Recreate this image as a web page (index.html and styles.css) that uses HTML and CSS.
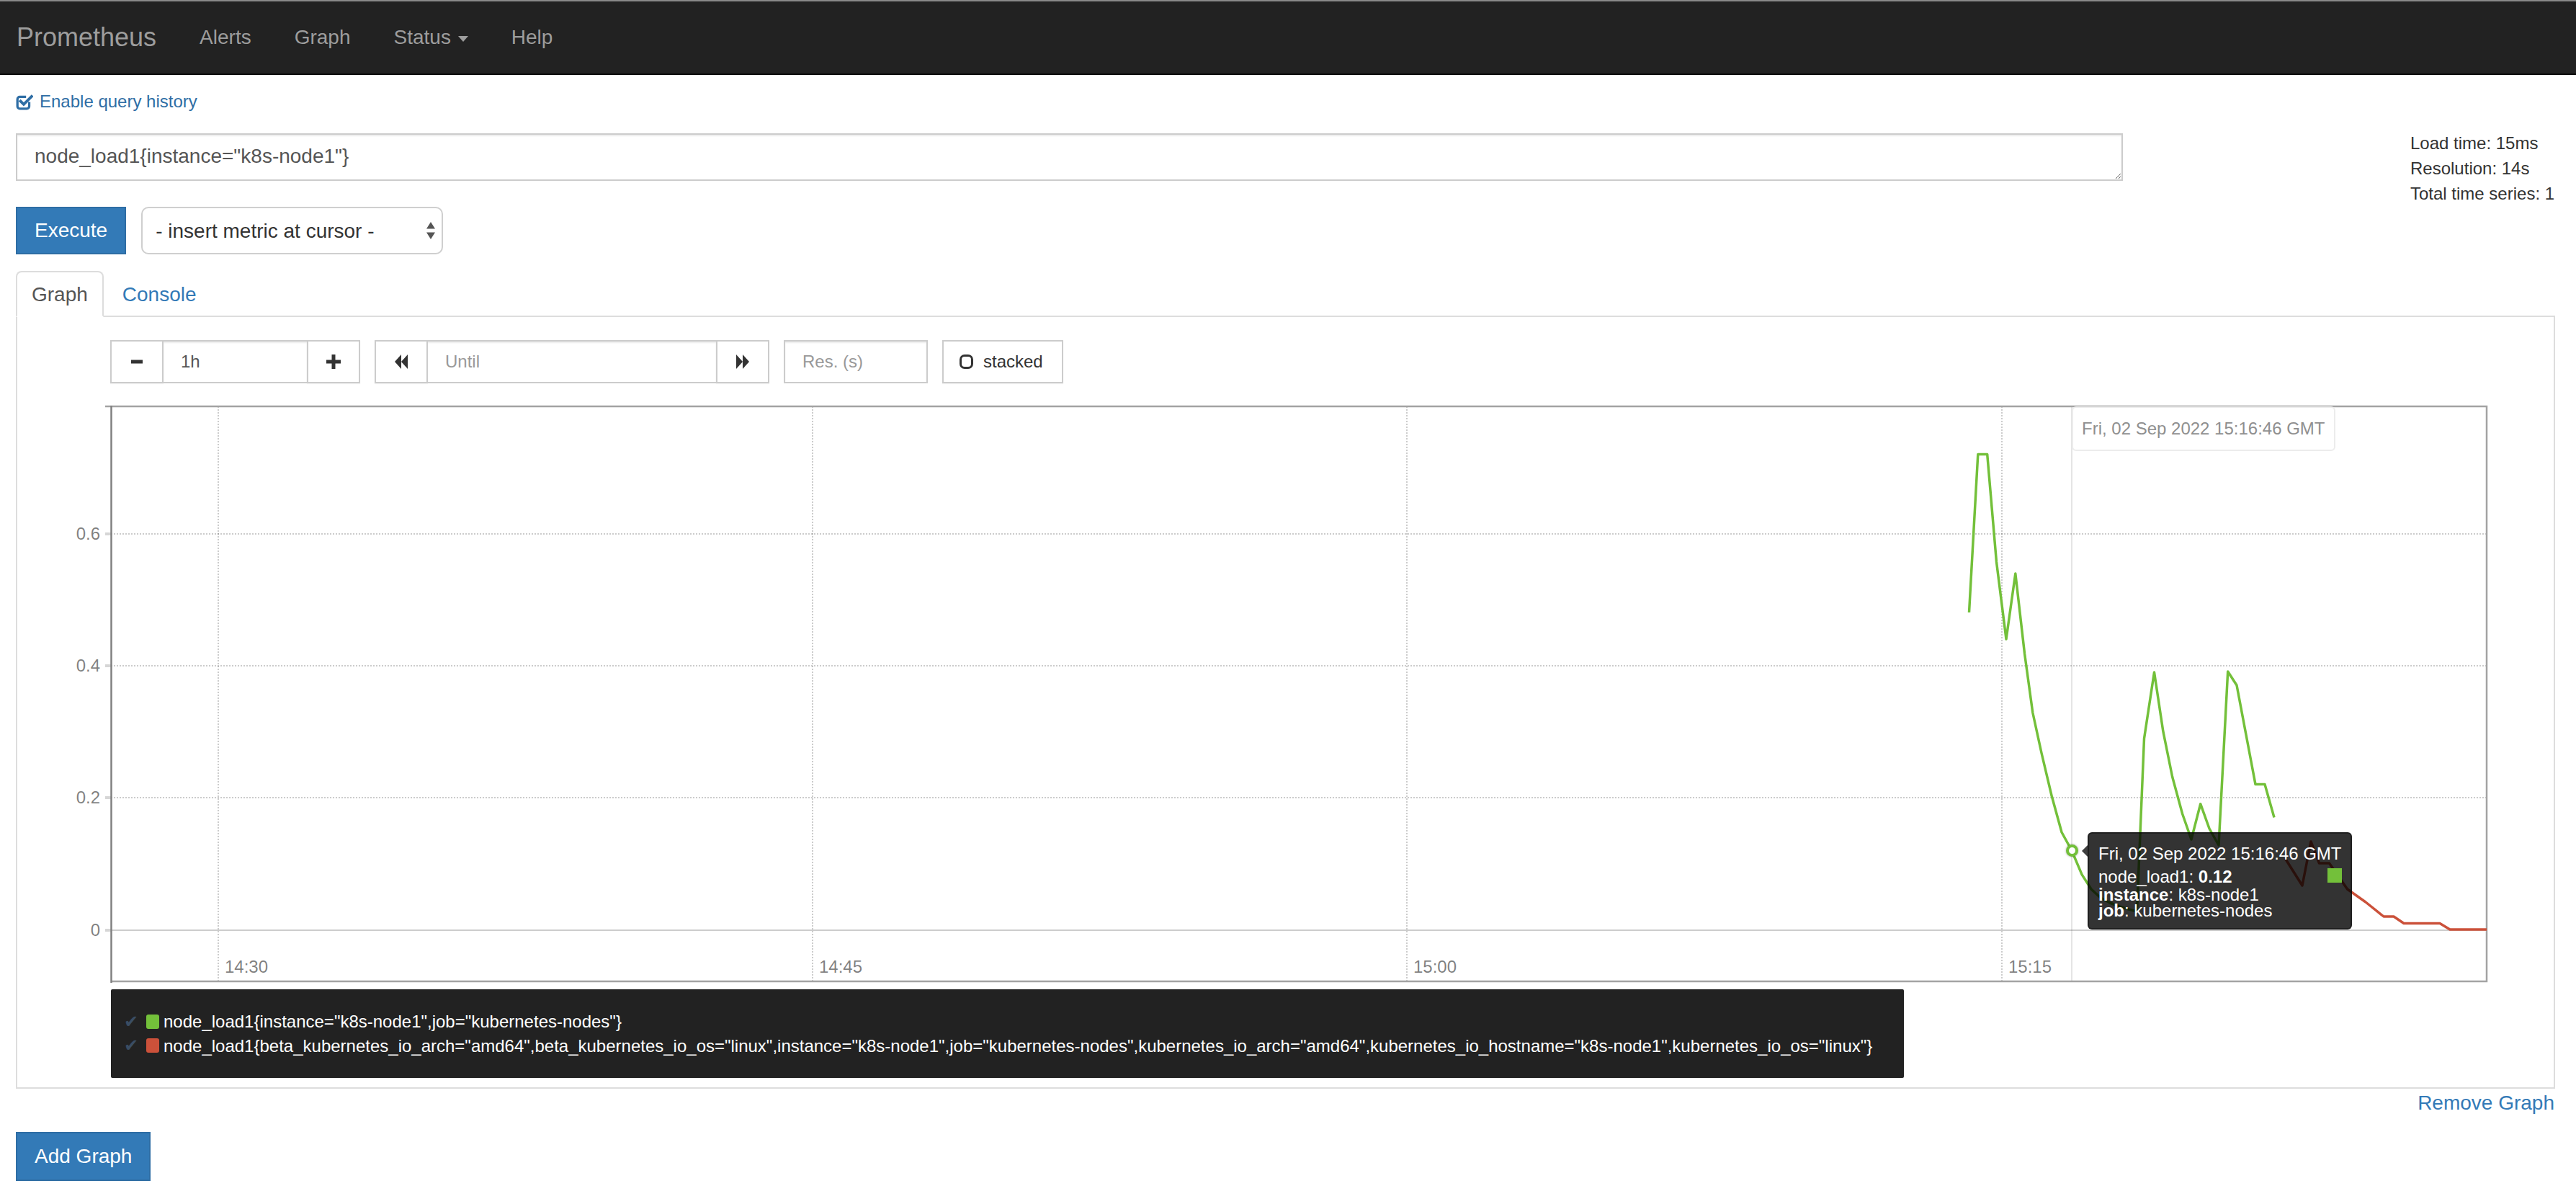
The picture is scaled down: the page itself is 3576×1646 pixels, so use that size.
FILE: index.html
```html
<!DOCTYPE html>
<html lang="en">
<head>
<meta charset="utf-8">
<title>Prometheus Time Series Collection and Processing Server</title>
<link rel="stylesheet" href="styles.css">
</head>
<body>
<nav class="navbar">
  <a class="brand" href="#">Prometheus</a>
  <ul class="nav">
    <li><a href="#">Alerts</a></li>
    <li><a href="#">Graph</a></li>
    <li><a href="#">Status <span class="caret"></span></a></li>
    <li><a href="#">Help</a></li>
  </ul>
</nav>

<main class="page">
  <div class="query-row">
    <div class="query-main">
      <a class="history" href="#">
        <svg class="chk" width="24" height="24" viewBox="0 0 22 22"><path d="M17 11.5v5.5a3 3 0 0 1-3 3H5a3 3 0 0 1-3-3V8a3 3 0 0 1 3-3h8" fill="none" stroke="currentColor" stroke-width="3"/><path d="M6 10.5l4 4 10-10" fill="none" stroke="currentColor" stroke-width="3.6" stroke-linecap="square"/></svg>
        <span>Enable query history</span>
      </a>
      <textarea class="expr" spellcheck="false">node_load1{instance="k8s-node1"}</textarea>
      <div class="exec-row">
        <button class="btn-primary">Execute</button>
        <label class="select">
          <select><option>- insert metric at cursor -</option></select>
          <svg width="14" height="26" viewBox="0 0 14 26"><path d="M7 1 L13 10.5 H1 Z M7 25 L13 15.5 H1 Z" fill="#555"/></svg>
        </label>
      </div>
    </div>
    <div class="stats">
      <div>Load time: 15ms</div>
      <div>Resolution: 14s</div>
      <div>Total time series: 1</div>
    </div>
  </div>

  <ul class="tabs">
    <li class="active"><a href="#">Graph</a></li>
    <li><a href="#">Console</a></li>
  </ul>

  <section class="panel">
    <div class="controls">
      <div class="igroup">
        <button class="cbtn"><svg width="16" height="6" viewBox="0 0 16 6"><rect y="0.5" width="16" height="5" fill="#333"/></svg></button>
        <input class="cinput w-range" value="1h">
        <button class="cbtn"><svg width="20" height="20" viewBox="0 0 20 20"><path d="M7.5 0h5v7.5H20v5h-7.5V20h-5v-7.5H0v-5h7.5z" fill="#333"/></svg></button>
      </div>
      <div class="igroup">
        <button class="cbtn"><svg width="20" height="20" viewBox="0 0 20 20"><path d="M10 0 L1 10 L10 20 Z M19 0 L10 10 L19 20 Z" fill="#333"/></svg></button>
        <input class="cinput w-until" placeholder="Until">
        <button class="cbtn"><svg width="20" height="20" viewBox="0 0 20 20"><path d="M1 0 L10 10 L1 20 Z M10 0 L19 10 L10 20 Z" fill="#333"/></svg></button>
      </div>
      <input class="cinput w-res solo" placeholder="Res. (s)">
      <button class="cbtn stacked"><svg width="19" height="20" viewBox="0 0 19 20"><rect x="1.5" y="1.5" width="16" height="17" rx="5.5" fill="none" stroke="#333" stroke-width="3"/></svg><span>stacked</span></button>
    </div>

    <div class="chart">
      <svg class="plot" width="3360" height="810" viewBox="0 0 3360 810">
        <g stroke="rgba(0,0,0,0.2)" stroke-width="2" stroke-dasharray="2 2" fill="none">
          <line x1="54" y1="187" x2="3352" y2="187"/>
          <line x1="54" y1="370" x2="3352" y2="370"/>
          <line x1="54" y1="553" x2="3352" y2="553"/>
          <line x1="203" y1="10" x2="203" y2="808"/>
          <line x1="1028" y1="10" x2="1028" y2="808"/>
          <line x1="1853" y1="10" x2="1853" y2="808"/>
          <line x1="2679" y1="10" x2="2679" y2="808"/>
        </g>
        <line x1="54" y1="737" x2="3352" y2="737" stroke="rgba(0,0,0,0.2)" stroke-width="2"/>
        <line x1="2776" y1="10" x2="2776" y2="808" stroke="rgba(0,0,0,0.1)" stroke-width="2"/>
        <g stroke="rgba(0,0,0,0.16)" stroke-width="4">
          <line x1="46" y1="187" x2="54" y2="187"/>
          <line x1="46" y1="370" x2="54" y2="370"/>
          <line x1="46" y1="553" x2="54" y2="553"/>
          <line x1="46" y1="737" x2="54" y2="737"/>
        </g>
        <path d="M46 10 H3352 V808 H54" fill="none" stroke="#a3a3a3" stroke-width="2.5"/>
        <line x1="54.5" y1="9" x2="54.5" y2="810" stroke="#808080" stroke-width="2.5"/>
        <g class="ylab" text-anchor="end">
          <text x="39" y="195">0.6</text>
          <text x="39" y="378">0.4</text>
          <text x="39" y="561">0.2</text>
          <text x="39" y="745">0</text>
        </g>
        <g class="xlab">
          <text x="212" y="796">14:30</text>
          <text x="1037" y="796">14:45</text>
          <text x="1862" y="796">15:00</text>
          <text x="2688" y="796">15:15</text>
        </g>
        <polyline fill="none" stroke="#73c03a" stroke-width="3.5" stroke-linejoin="round" points="2633.5,296 2645.8,76.5 2658.7,76.5 2671.5,226 2685,333 2697.8,242 2710.6,353.5 2721.8,435 2734,491 2748,550 2762,601 2776,626.5 2790,659.6 2803,680 2816,692 2829,699 2842,704 2855,708 2866.5,711 2876.5,471 2890.5,379 2902.8,460.7 2915.6,524 2929.6,575.5 2942,611 2954.7,561.7 2967,596 2980,619 2992.7,378 3005,397 3018,465.8 3031,534.6 3044,534.6 3057,580.6"/>
        <polyline fill="none" stroke="#cb513a" stroke-width="3.5" stroke-linejoin="round" points="3072,637 3096,675 3108,614 3119.5,644 3133.5,644 3158.6,680 3184,698 3209,718 3223,718 3237,727.5 3287,727.5 3301,736 3352,736"/>
      </svg>
      <div class="xlabel">Fri, 02 Sep 2022 15:16:46 GMT</div>
      <div class="dot"></div>
      <div class="tip">
        <div class="tip-date">Fri, 02 Sep 2022 15:16:46 GMT</div>
        <div class="tip-val"><span class="tip-sw"></span>node_load1: <b>0.12</b></div>
        <div class="tip-lbl"><b>instance</b>: k8s-node1</div>
        <div class="tip-lbl"><b>job</b>: kubernetes-nodes</div>
      </div>
    </div>

    <div class="legend">
      <ul>
        <li><span class="action">✔</span><span class="swatch green"></span><span class="label">node_load1{instance="k8s-node1",job="kubernetes-nodes"}</span></li>
        <li><span class="action">✔</span><span class="swatch red"></span><span class="label">node_load1{beta_kubernetes_io_arch="amd64",beta_kubernetes_io_os="linux",instance="k8s-node1",job="kubernetes-nodes",kubernetes_io_arch="amd64",kubernetes_io_hostname="k8s-node1",kubernetes_io_os="linux"}</span></li>
      </ul>
    </div>
  </section>

  <div class="remove"><a href="#">Remove Graph</a></div>
  <div class="add-row"><button class="btn-primary add">Add Graph</button></div>
</main>
</body>
</html>
```

FILE: styles.css
```css
* { box-sizing: border-box; }
html, body { margin: 0; padding: 0; }
body {
  font-family: "Liberation Sans", Arial, Helvetica, sans-serif;
  font-size: 28px;
  line-height: 40px;
  color: #333;
  background: #fff;
  overflow: hidden;
}
a { color: #337ab7; text-decoration: none; }

/* navbar */
.navbar {
  display: flex;
  align-items: center;
  height: 104px;
  background: #222;
  border-top: 2px solid #8a8a8a;
  border-bottom: 2px solid #080808;
}
.brand {
  font-size: 36px;
  line-height: 40px;
  color: #9d9d9d;
  padding: 0 30px 0 23px;
}
.nav { display: flex; list-style: none; margin: 0; padding: 0; }
.nav a {
  display: block;
  padding: 0 30px;
  color: #9d9d9d;
  font-size: 28px;
  line-height: 40px;
}
.caret {
  display: inline-block;
  width: 0;
  height: 0;
  margin-left: 2px;
  vertical-align: middle;
  border-top: 8px solid #9d9d9d;
  border-left: 7px solid transparent;
  border-right: 7px solid transparent;
}

/* page */
.page { padding: 0 29px 0 22px; }
.query-row { display: flex; }
.query-main { width: 2925px; flex: none; }
.history {
  display: flex;
  align-items: center;
  gap: 9px;
  margin-top: 20px;
  height: 34px;
  font-size: 24px;
  line-height: 34px;
  color: #2f6ea5;
}
.chk { flex: none; }
.expr {
  display: block;
  margin-top: 27px;
  width: 100%;
  height: 66px;
  padding: 10px 24px;
  font-family: "Liberation Sans", Arial, sans-serif;
  font-size: 28px;
  line-height: 40px;
  color: #555;
  border: 2px solid #ccc;
  border-radius: 0;
  box-shadow: inset 0 2px 2px rgba(0,0,0,.075);
  resize: vertical;
  overflow: hidden;
}
.exec-row { display: flex; gap: 21px; margin-top: 36px; }
.btn-primary {
  height: 66px;
  padding: 0 24px;
  font-family: "Liberation Sans", Arial, sans-serif;
  font-size: 28px;
  line-height: 62px;
  color: #fff;
  background: #337ab7;
  border: 2px solid #2e6da4;
  border-radius: 0;
}
.select {
  display: flex;
  align-items: center;
  width: 419px;
  height: 66px;
  padding: 0 8px 0 18px;
  border: 2px solid #cfcfcf;
  border-radius: 10px;
  background: #fff;
}
.select select {
  flex: 1;
  appearance: none;
  -webkit-appearance: none;
  border: 0;
  background: transparent;
  padding: 0;
  font-family: "Liberation Sans", Arial, sans-serif;
  font-size: 28px;
  color: #333;
  outline: none;
}
.stats {
  margin-left: 399px;
  padding-top: 77px;
  font-size: 24px;
  line-height: 35px;
  white-space: nowrap;
  color: #333;
}

/* tabs */
.tabs {
  display: flex;
  list-style: none;
  margin: 23px 0 0;
  padding: 0;
  border-bottom: 2px solid #ddd;
}
.tabs li { margin-bottom: -2px; margin-right: 4px; }
.tabs a {
  display: block;
  padding: 11px 20px 9px;
  line-height: 40px;
  border: 2px solid transparent;
  border-radius: 8px 8px 0 0;
}
.tabs .active a {
  color: #555;
  background: #fff;
  border-color: #ddd #ddd transparent;
}
.panel {
  border: 2px solid #ddd;
  border-top: 0;
  padding: 32px 0 13px;
}

/* controls */
.controls { display: flex; gap: 20px; margin-left: 129px; height: 60px; }
.igroup { display: flex; }
.cbtn {
  display: flex;
  align-items: center;
  justify-content: center;
  width: 74px;
  height: 60px;
  padding: 0;
  background: #fff;
  border: 2px solid #ccc;
  border-radius: 0;
  font-family: "Liberation Sans", Arial, sans-serif;
  font-size: 24px;
  color: #333;
  box-shadow: 0 1px 1px rgba(0,0,0,.05);
}
.cinput {
  height: 60px;
  padding: 0 24px;
  border: 2px solid #ccc;
  border-left: 0;
  border-right: 0;
  border-radius: 0;
  font-family: "Liberation Sans", Arial, sans-serif;
  font-size: 24px;
  color: #555;
  box-shadow: inset 0 2px 2px rgba(0,0,0,.075);
  outline: none;
}
.cinput::placeholder { color: #999; }
.cinput.solo { border-left: 2px solid #ccc; border-right: 2px solid #ccc; }
.w-range { width: 199px; }
.w-until { width: 400px; }
.w-res { width: 200px; }
.stacked { width: 168px; justify-content: flex-start; padding: 0 22px; gap: 14px; }

/* chart */
.chart {
  position: relative;
  width: 3360px;
  height: 810px;
  margin: 22px 0 0 76px;
}
.plot { display: block; }
.plot text {
  font-family: "Liberation Sans", Arial, sans-serif;
  font-size: 24px;
  fill: #000;
  fill-opacity: 0.5;
}
.xlabel {
  position: absolute;
  left: 2776px;
  top: 10px;
  padding: 14px 12px;
  font-size: 24px;
  line-height: 30px;
  color: #8f8f8f;
  background: rgba(255,255,255,0.85);
  border: 2px solid #ececec;
  border-radius: 6px;
  white-space: nowrap;
}
.dot {
  position: absolute;
  left: 2768px;
  top: 618px;
  width: 17px;
  height: 17px;
  border: 4px solid #73c03a;
  background: #fff;
  border-radius: 50%;
  box-shadow: 0 0 3px rgba(0,0,0,.35);
}
.tip {
  position: absolute;
  left: 2798px;
  top: 601px;
  padding: 14px 12px 13px 13px;
  background: rgba(0,0,0,.8);
  border: 2px solid rgba(0,0,0,.4);
  border-radius: 6px;
  color: #fff;
  font-size: 24px;
  white-space: nowrap;
}
.tip::before {
  content: "";
  position: absolute;
  left: -10px;
  top: 16px;
  border-right: 8px solid rgba(0,0,0,.75);
  border-top: 8px solid transparent;
  border-bottom: 8px solid transparent;
}
.tip-date { line-height: 28px; margin-bottom: 4px; }
.tip-val { line-height: 28px; }
.tip-lbl { line-height: 22px; }
.tip-sw {
  float: right;
  width: 20px;
  height: 20px;
  margin-top: 2px;
  background: #73c03a;
}

/* legend */
.legend {
  width: max-content;
  margin: 9px 0 0 130px;
  padding: 24px 10px;
  background: #222;
  color: #fff;
  font-size: 24px;
  line-height: 33.6px;
  border-radius: 2px;
}
.legend ul { list-style: none; margin: 4px; padding: 0; }
.legend li {
  display: flex;
  align-items: center;
  padding: 0 30px 0 4px;
  white-space: nowrap;
}
.action {
  width: 26px;
  margin-right: 5px;
  font-family: "DejaVu Sans", sans-serif;
  font-size: 24px;
  line-height: 30px;
  color: #3a4d63;
}
.swatch {
  width: 18px;
  height: 20px;
  margin-right: 6px;
  border-radius: 3px;
}
.swatch.green { background: #73c03a; }
.swatch.red { background: #cb513a; }

/* bottom */
.remove { text-align: right; line-height: 40px; padding-right: 1px; }
.add-row { margin-top: 20px; }
.add { height: 68px; line-height: 64px; }
```
